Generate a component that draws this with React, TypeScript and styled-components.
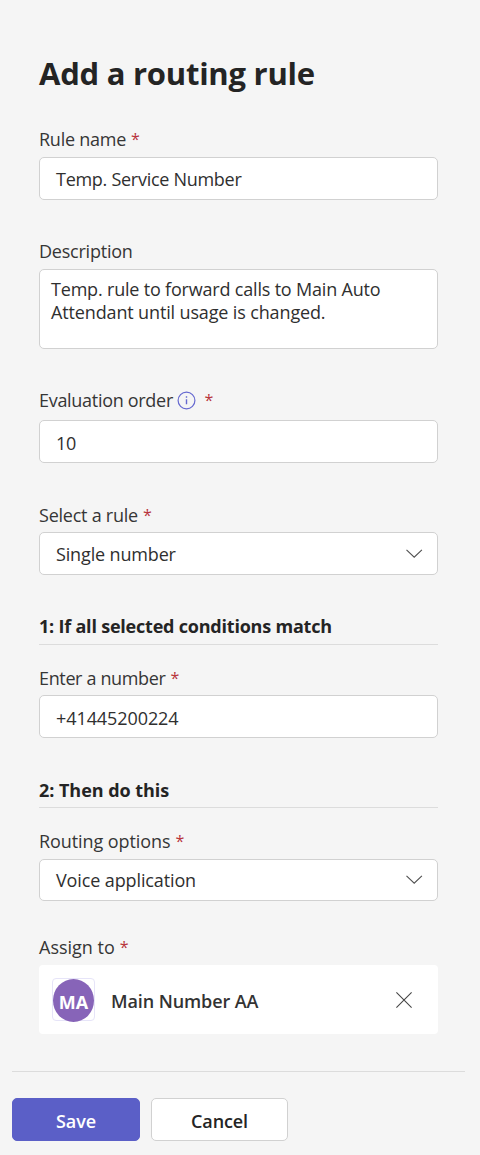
import React from "react";
import styled, { createGlobalStyle } from "styled-components";

const GlobalStyle = createGlobalStyle`
  *, *::before, *::after { box-sizing: border-box; }
  body {
    margin: 0;
    background: #f5f5f5;
    color: #2f2f2f;
    font-family: "Open Sans", "Noto Sans", sans-serif;
    font-size: 18px;
    line-height: 26px;
  }
`;

const Panel = styled.div`
  width: 480px;
  height: 1155px;
  display: flex;
  flex-direction: column;
  background: #f5f5f5;
`;

const Form = styled.main`
  padding: 51px 42px 0 39px;
`;

const Title = styled.h1`
  margin: 0;
  height: 75px;
  font-size: 31px;
  line-height: 44px;
  font-weight: 700;
  color: #242424;
  white-space: nowrap;
`;

const Text = styled.span<{ $track?: number }>`
  letter-spacing: ${(p) => p.$track ?? 0}px;
  white-space: nowrap;
`;

const Field = styled.div<{ $after: number }>`
  margin-bottom: ${(p) => p.$after}px;
`;

const Label = styled.div<{ $height?: number }>`
  display: flex;
  height: ${(p) => p.$height ?? 31}px;
  color: #363636;
`;

const Required = styled.span<{ $gap?: number }>`
  margin-left: ${(p) => p.$gap ?? 5}px;
  color: #b8343c;
  font-size: 16px;
`;

const InfoIcon = styled.svg`
  margin: 4px 0 0 4px;
  width: 19px;
  height: 19px;
  flex: none;
`;

const Control = styled.div<{ $height?: number; $drop?: number }>`
  display: flex;
  align-items: center;
  justify-content: space-between;
  height: ${(p) => p.$height ?? 43}px;
  padding: ${(p) => p.$drop ?? 0}px 14px 0 16px;
  border: 1px solid #d1d1d1;
  border-radius: 5px;
  background: #fff;
`;

const TextArea = styled.div`
  display: flex;
  flex-direction: column;
  height: 80px;
  padding: 8px 11px;
  border: 1px solid #d1d1d1;
  border-radius: 5px;
  background: #fff;
  line-height: 23px;
`;

const SectionTitle = styled.h2<{ $height: number; $after: number }>`
  margin: 0 0 ${(p) => p.$after}px;
  height: ${(p) => p.$height}px;
  border-bottom: 1px solid #dcdcdc;
  font-size: 18px;
  line-height: 26px;
  font-weight: 700;
  color: #242424;
`;

const Assignee = styled.div`
  display: flex;
  align-items: center;
  height: 69px;
  padding: 0 26px 0 13px;
  border-radius: 4px;
  background: #fff;
`;

const AvatarFrame = styled.div`
  width: 43px;
  height: 43px;
  border: 1px solid #e6e4f8;
  border-radius: 4px;
  display: flex;
  align-items: flex-start;
  justify-content: center;
`;

const Avatar = styled.div`
  width: 41px;
  height: 43px;
  flex: none;
  border-radius: 50%;
  background: #8764b8;
  color: #fff;
  font-weight: 700;
  line-height: 46px;
  text-align: center;
`;

const AssigneeName = styled.div`
  flex: 1;
  padding: 3px 0 0 16px;
  font-weight: 600;
  color: #333;
`;

const Footer = styled.footer`
  margin: 37px 15px 0 12px;
  padding-top: 26px;
  border-top: 1px solid #dcdcdc;
  display: flex;
  gap: 11px;
`;

const Button = styled.button<{ $primary?: boolean }>`
  width: ${(p) => (p.$primary ? 128 : 137)}px;
  height: 43px;
  padding: 2px 0 0;
  border: 1px solid ${(p) => (p.$primary ? "#5b5fc7" : "#d1d1d1")};
  border-radius: 5px;
  background: ${(p) => (p.$primary ? "#5b5fc7" : "#fff")};
  color: ${(p) => (p.$primary ? "#fff" : "#242424")};
  font: 600 18px/26px "Open Sans", "Noto Sans", sans-serif;
`;

const Chevron = () => (
  <svg width="18" height="12" viewBox="0 0 18 12" fill="none" stroke="#505050" strokeWidth="1.1">
    <path d="M1.5 1.8 9.2 9.2 16.9 1.8" />
  </svg>
);

const Close = () => (
  <svg width="16" height="16" viewBox="0 0 16 16" fill="none" stroke="#444" strokeWidth="1.05">
    <path d="M0.4 0.4 15.6 15.6M15.6 0.4 0.4 15.6" />
  </svg>
);

export default function App() {
  return (
    <>
      <GlobalStyle />
      <Panel>
        <Form>
          <Title><Text $track={-0.24}>Add a routing rule</Text></Title>

          <Field $after={38}>
            <Label><Text $track={-0.25}>Rule name</Text><Required>*</Required></Label>
            <Control><Text $track={-0.28}>Temp. Service Number</Text></Control>
          </Field>

          <Field $after={38}>
            <Label><Text $track={-0.22}>Description</Text></Label>
            <TextArea>
              <Text $track={-0.19}>Temp. rule to forward calls to Main Auto</Text>
              <Text $track={-0.14}>Attendant until usage is changed.</Text>
            </TextArea>
          </Field>

          <Field $after={39}>
            <Label $height={33}>
              <Text $track={-0.3}>Evaluation order</Text>
              <InfoIcon viewBox="0 0 19 19" fill="none" stroke="#6669d0">
                <circle cx="9.5" cy="9.5" r="8.4" strokeWidth="1.2" />
                <path d="M9.5 8.2v5M9.5 5.2v1.6" strokeWidth="1.4" />
              </InfoIcon>
              <Required $gap={8.5}>*</Required>
            </Label>
            <Control $drop={2}><Text $track={-0.2}>10</Text></Control>
          </Field>

          <Field $after={38}>
            <Label $height={30}><Text $track={-0.24}>Select a rule</Text><Required>*</Required></Label>
            <Control $drop={1}><Text $track={-0.15}>Single number</Text><Chevron /></Control>
          </Field>

          <SectionTitle $height={32} $after={20}><Text $track={-0.21}>1: If all selected conditions match</Text></SectionTitle>

          <Field $after={39}>
            <Label $height={30}><Text $track={-0.36}>Enter a number</Text><Required>*</Required></Label>
            <Control $drop={3}><Text $track={-0.08}>+41445200224</Text></Control>
          </Field>

          <SectionTitle $height={31} $after={20}><Text $track={-0.04}>2: Then do this</Text></SectionTitle>

          <Field $after={33}>
            <Label><Text $track={-0.08}>Routing options</Text><Required>*</Required></Label>
            <Control $height={42}><Text $track={-0.12}>Voice application</Text><Chevron /></Control>
          </Field>

          <Field $after={0}>
            <Label><Text>Assign to</Text><Required>*</Required></Label>
            <Assignee>
              <AvatarFrame><Avatar>MA</Avatar></AvatarFrame>
              <AssigneeName><Text $track={-0.1}>Main Number AA</Text></AssigneeName>
              <Close />
            </Assignee>
          </Field>
        </Form>
        <Footer>
          <Button $primary><Text $track={-0.1}>Save</Text></Button>
          <Button><Text $track={-0.1}>Cancel</Text></Button>
        </Footer>
      </Panel>
    </>
  );
}
